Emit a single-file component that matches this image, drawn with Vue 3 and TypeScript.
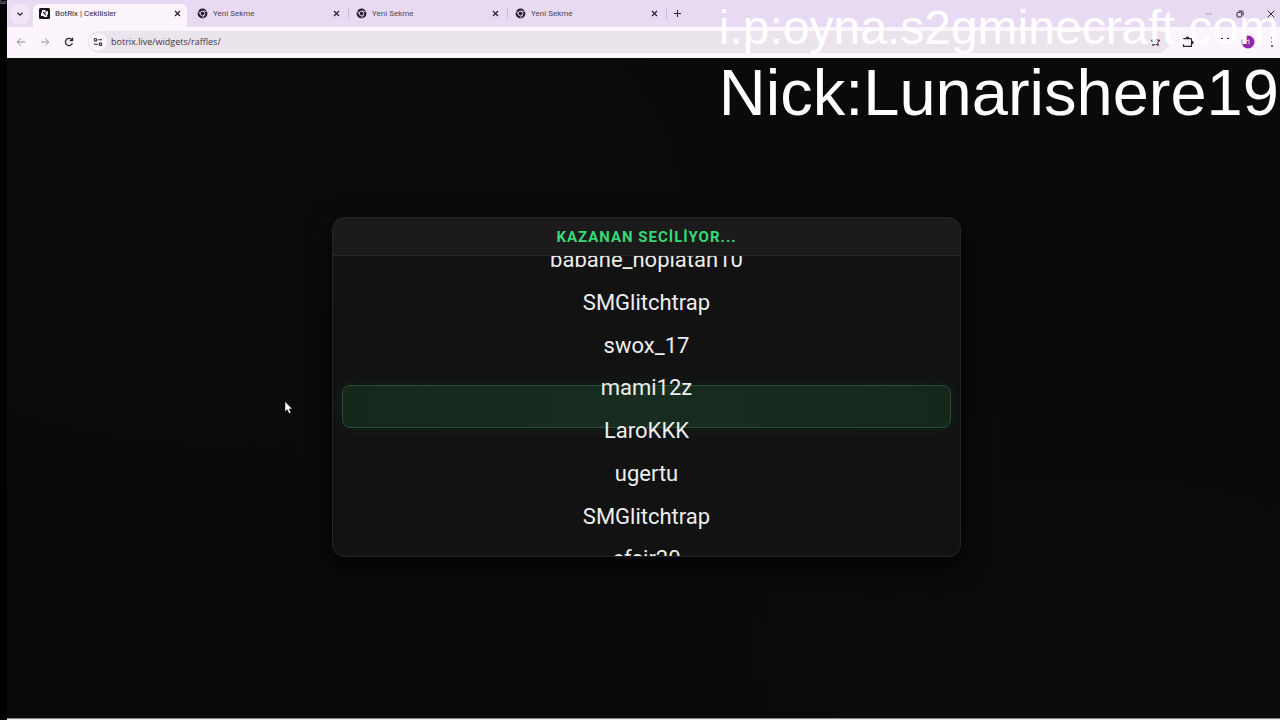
<script setup lang="ts">
interface Tab {
  title: string
  active: boolean
}

const tabs: Tab[] = [
  { title: 'BotRix | Cekilisler', active: true },
  { title: 'Yeni Sekme', active: false },
  { title: 'Yeni Sekme', active: false },
  { title: 'Yeni Sekme', active: false },
]

const names: string[] = [
  'babane_hoplatan10',
  'SMGlitchtrap',
  'swox_17',
  'mami12z',
  'LaroKKK',
  'ugertu',
  'SMGlitchtrap',
  'efsir20',
]
</script>

<template>
  <div class="screen">
    <aside class="edge">luc</aside>
    <div class="browser">
      <header class="tabstrip">
        <button class="chevron" aria-label="Sekmelerde ara">
          <svg width="8" height="8" viewBox="0 0 8 8"><path d="M1.5 2.7 4 5.2 6.500 2.7" fill="none" stroke="#2d2635" stroke-width="1.300" /></svg>
        </button>
        <nav class="tabs">
          <div v-for="(tab, i) in tabs" :key="i" class="tab" :class="{ active: tab.active }">
            <button class="tab-main">
              <svg v-if="tab.active" width="11" height="11" viewBox="0 0 11 11">
                <rect width="11" height="11" rx="1.500" fill="#15121a" />
                <path d="M3 2h3l.8 1.200H9v3L8.200 7v2h-3l-.8-1H2V5l1-.8z" fill="#f7f0fb" />
                <path d="M4.200 4.200 6.800 6.800M6.800 4.200h-1.200" stroke="#15121a" stroke-width="1.100" fill="none" />
              </svg>
              <svg v-else width="11" height="11" viewBox="0 0 11 11">
                <circle cx="5.500" cy="5.500" r="4.900" fill="#282130" />
                <circle cx="5.500" cy="5.500" r="2.300" fill="#282130" stroke="#e9daf4" stroke-width="0.900" />
                <path d="M5.500 3.200H10M3.500 6.600 1.300 2.900M7.500 6.600 5.300 10.300" stroke="#e9daf4" stroke-width="0.800" />
              </svg>
              <span>{{ tab.title }}</span>
            </button>
            <button class="icon-btn" aria-label="Sekmeyi kapat">
              <svg width="7" height="7" viewBox="0 0 7 7"><path d="m1 1 5 5M6 1 1 6" stroke="#211b28" stroke-width="1.100" /></svg>
            </button>
          </div>
        </nav>
        <button class="icon-btn plus" aria-label="Yeni sekme">
          <svg width="9" height="9" viewBox="0 0 9 9"><path d="M4.500 1v7M1 4.500h7" stroke="#2d2635" stroke-width="1.100" /></svg>
        </button>
        <div class="window-controls">
          <button class="icon-btn" aria-label="Simge durumuna küçült">
            <svg width="8" height="8" viewBox="0 0 8 8"><path d="M1 4h6" stroke="#a99db4" /></svg>
          </button>
          <button class="icon-btn" aria-label="Geri yükle">
            <svg width="8" height="8" viewBox="0 0 8 8" fill="none" stroke="#2d2635"><rect x="1" y="2.300" width="4.700" height="4.700" rx="1" /><path d="M2.800 1h3A1.300 1.300 0 0 1 7.100 2.300v3" /></svg>
          </button>
          <button class="icon-btn" aria-label="Kapat">
            <svg width="8" height="8" viewBox="0 0 8 8"><path d="m.7.7 6.600 6.600M7.300.7.7 7.300" stroke="#2d2635" /></svg>
          </button>
        </div>
      </header>

      <div class="toolbar">
        <div class="nav-buttons">
          <button class="icon-btn" aria-label="Geri">
            <svg width="10" height="10" viewBox="0 0 10 10" fill="none" stroke="#958c9b"><path d="M9 5H1.200M4.800 1.400 1.200 5l3.600 3.600" /></svg>
          </button>
          <button class="icon-btn" aria-label="İleri">
            <svg width="10" height="10" viewBox="0 0 10 10" fill="none" stroke="#958c9b"><path d="M1 5h7.800M5.200 1.400 8.800 5 5.200 8.600" /></svg>
          </button>
          <button class="icon-btn" aria-label="Yenile">
            <svg width="10" height="10" viewBox="0 0 10 10" fill="none" stroke="#2a2430" stroke-width="1.200"><path d="M8.400 6.200A3.600 3.600 0 1 1 8 3M8.600.8v2.800H5.800" /></svg>
          </button>
        </div>
        <div class="omnibox">
          <button class="site-info" aria-label="Site bilgileri">
            <svg width="10" height="10" viewBox="0 0 10 10" fill="none" stroke="#2a2430" stroke-width="1.100"><circle cx="2.500" cy="2.800" r="1.300" /><path d="M5.200 2.800H9M1 7.200h3.800" /><circle cx="7.500" cy="7.200" r="1.300" /></svg>
          </button>
          <input type="text" value="botrix.live/widgets/raffles/" aria-label="Adres çubuğu" />
          <button class="icon-btn" aria-label="Yer işareti ekle">
            <svg width="11" height="11" viewBox="0 0 11 11" fill="none" stroke="#2a2430"><path d="m5.500 1 1.300 3 3.200.3-2.400 2.100.7 3.200-2.800-1.700-2.800 1.700.7-3.200L1 4.300 4.200 4z" /></svg>
          </button>
        </div>
        <div class="actions">
          <button class="icon-btn" aria-label="Uzantılar">
            <svg width="12" height="12" viewBox="0 0 12 12" fill="none" stroke="#2a2430" stroke-width="1.100"><path d="M1.500 4.600V2.600h8v7.800h-8V8.200" /><path d="M4.300 2.200a1.200 1.200 0 0 1 2.400 0M9.900 5.300a1.200 1.200 0 0 1 0 2.400" fill="#2a2430" /></svg>
          </button>
          <button class="icon-btn" aria-label="İndirilenler">
            <svg width="10" height="10" viewBox="0 0 10 10" fill="none" stroke="#2a2430"><path d="M1 1.500h2M7 1.500h2M3 4l2 2 2-2" /></svg>
          </button>
          <button class="avatar" aria-label="Profil">
            <svg width="14" height="14" viewBox="0 0 14 14"><circle cx="7" cy="7" r="6.500" fill="#9127a8" /><path d="M5.500 6.200 8 4.800v4.400" fill="none" stroke="#ecd2f2" /></svg>
          </button>
          <button class="icon-btn menu" aria-label="Menü">
            <svg width="4" height="12" viewBox="0 0 4 12" fill="#3a3341"><circle cx="2" cy="2" r="1" /><circle cx="2" cy="6" r="1" /><circle cx="2" cy="10" r="1" /></svg>
          </button>
        </div>
      </div>

      <main class="stage">
        <section class="card">
          <h1>KAZANAN SECİLİYOR...</h1>
          <div class="reel">
            <div class="marker"></div>
            <ul>
              <li v-for="(name, i) in names" :key="i">{{ name }}</li>
            </ul>
          </div>
        </section>
      </main>
      <footer class="taskbar"></footer>
    </div>

    <div class="overlay">
      <p class="server">i.p:oyna.s2gminecraft.com</p>
      <p class="nick">Nick:Lunarishere19</p>
    </div>
    <svg class="cursor" width="10" height="14" viewBox="0 0 10 14"><path d="M1 .5v10.300l2.300-2.200 1.700 4 1.900-.8-1.700-3.900h3.100z" fill="#fff" stroke="#111" stroke-width="0.500" /></svg>
  </div>
</template>

<style>
body {
  margin: 0;
  background: #000;
  overflow: hidden;
}
</style>

<style scoped>
.screen {
  position: relative;
  display: flex;
  height: 100vh;
  overflow: hidden;
  background: #000;
  font-family: "Open Sans", "Noto Sans", sans-serif;
}

button {
  display: flex;
  align-items: center;
  justify-content: center;
  padding: 0;
  border: 0;
  background: none;
  font: inherit;
  color: inherit;
}

.edge {
  flex: none;
  width: 7px;
  overflow: hidden;
  color: #c9c9c9;
  font-size: 5px;
  line-height: 5px;
}

.browser {
  flex: 1;
  min-width: 0;
  display: flex;
  flex-direction: column;
}

.tabstrip {
  flex: none;
  display: flex;
  align-items: center;
  height: 27px;
  background: #e9daf4;
}

.chevron {
  width: 18px;
  height: 20px;
  margin: 0 4px;
  border-radius: 6px;
  background: #f1e5f8;
}

.tabs {
  display: flex;
  align-self: stretch;
}

.tab {
  display: flex;
  align-items: center;
  box-sizing: border-box;
  width: 159px;
  padding: 0 8px 0 6px;
  position: relative;
  color: #4f4658;
  font-family: Roboto, "Noto Sans", sans-serif;
  font-size: 8px;
}

.tab:not(.active)::after {
  content: "";
  position: absolute;
  right: 1px;
  top: 8px;
  height: 11px;
  width: 1px;
  background: #cdb7dd;
}

.tab.active {
  width: 154px;
  margin: 4px 4px 0 0;
  padding: 0 4px 4px 6px;
  border-radius: 6px 6px 0 0;
  background: #fcf5fe;
  color: #2e2735;
}

.tab-main {
  flex: 1;
  justify-content: flex-start;
  gap: 5px;
  line-height: 14px;
}

.icon-btn {
  width: 12px;
  height: 12px;
}

.plus {
  margin-left: 3px;
}

.window-controls {
  display: flex;
  gap: 19px;
  margin-left: auto;
  padding-right: 3px;
}

.toolbar {
  flex: none;
  display: flex;
  align-items: center;
  box-sizing: border-box;
  height: 31px;
  padding-bottom: 2px;
  background: #fcf5fe;
}

.nav-buttons {
  display: flex;
  gap: 12px;
  padding: 0 13px 0 8px;
}

.omnibox {
  flex: 1;
  display: flex;
  align-items: center;
  height: 22px;
  padding: 0 8px 0 1px;
  border-radius: 11px;
  background: #ebe4ec;
}

.site-info {
  width: 18px;
  height: 18px;
  border-radius: 50%;
  background: #fcf5fe;
}

.omnibox input {
  flex: 1;
  min-width: 0;
  margin: 0;
  padding: 0 4px;
  border: 0;
  outline: 0;
  background: none;
  color: #3c3542;
  font: 9px/14px "Open Sans", "Noto Sans", sans-serif;
}

.actions {
  display: flex;
  align-items: center;
  padding: 0 2px 0 13px;
  gap: 10px;
}

.actions .icon-btn:nth-child(2) {
  margin-left: 15px;
}

.actions .menu {
  margin-left: 1px;
}

.stage {
  flex: 1;
  min-height: 0;
  display: flex;
  align-items: center;
  justify-content: center;
  padding: 0 0 2px 6px;
  background:
    radial-gradient(ellipse 45% 50% at 18% 20%, #0a0d0c, transparent),
    radial-gradient(ellipse 40% 40% at 85% 90%, #0b0c0b, transparent),
    #0a0a0a;
}

.card {
  box-sizing: border-box;
  width: 629px;
  max-width: 100%;
  overflow: hidden;
  border: 1px solid #252525;
  border-radius: 12px;
  background: #121212;
  box-shadow: 0 8px 28px #000;
}

.card h1 {
  margin: 0;
  padding: 10px 0 8px;
  border-bottom: 1px solid #2a2a2a;
  background: #1b1b1b;
  color: #36d975;
  font: 700 15px/19px Roboto, sans-serif;
  letter-spacing: 1px;
  text-align: center;
}

.reel {
  position: relative;
  height: 300px;
  overflow: hidden;
}

.marker {
  position: absolute;
  inset: 129px 9px auto;
  box-sizing: border-box;
  height: 43px;
  border: 1px solid #234d36;
  border-radius: 8px;
  background: linear-gradient(90deg, #16271c, #182c1f 50%, #16271c);
  box-shadow: 0 0 18px rgba(34, 120, 66, 0.16);
}

.reel ul {
  position: relative;
  display: grid;
  grid-auto-rows: 1fr;
  height: 342px;
  margin: -17px 0 0;
  padding: 0;
  list-style: none;
  color: #ededed;
  font: 400 22px/42px Roboto, sans-serif;
  text-align: center;
}

.taskbar {
  flex: none;
  box-sizing: border-box;
  height: 2px;
  background: #f3edf2;
  border-top: 1px solid #8a8688;
}

.overlay {
  position: absolute;
  top: 0;
  right: 1px;
  color: #fff;
  font-family: "Liberation Sans", Arial, sans-serif;
  text-align: center;
  white-space: nowrap;
  pointer-events: none;
}

.overlay p {
  margin: 0;
}

.server {
  font-size: 48px;
  line-height: 56px;
}

.nick {
  font-size: 65px;
  line-height: 73px;
}

.cursor {
  position: absolute;
  left: 284px;
  top: 401px;
}
</style>
